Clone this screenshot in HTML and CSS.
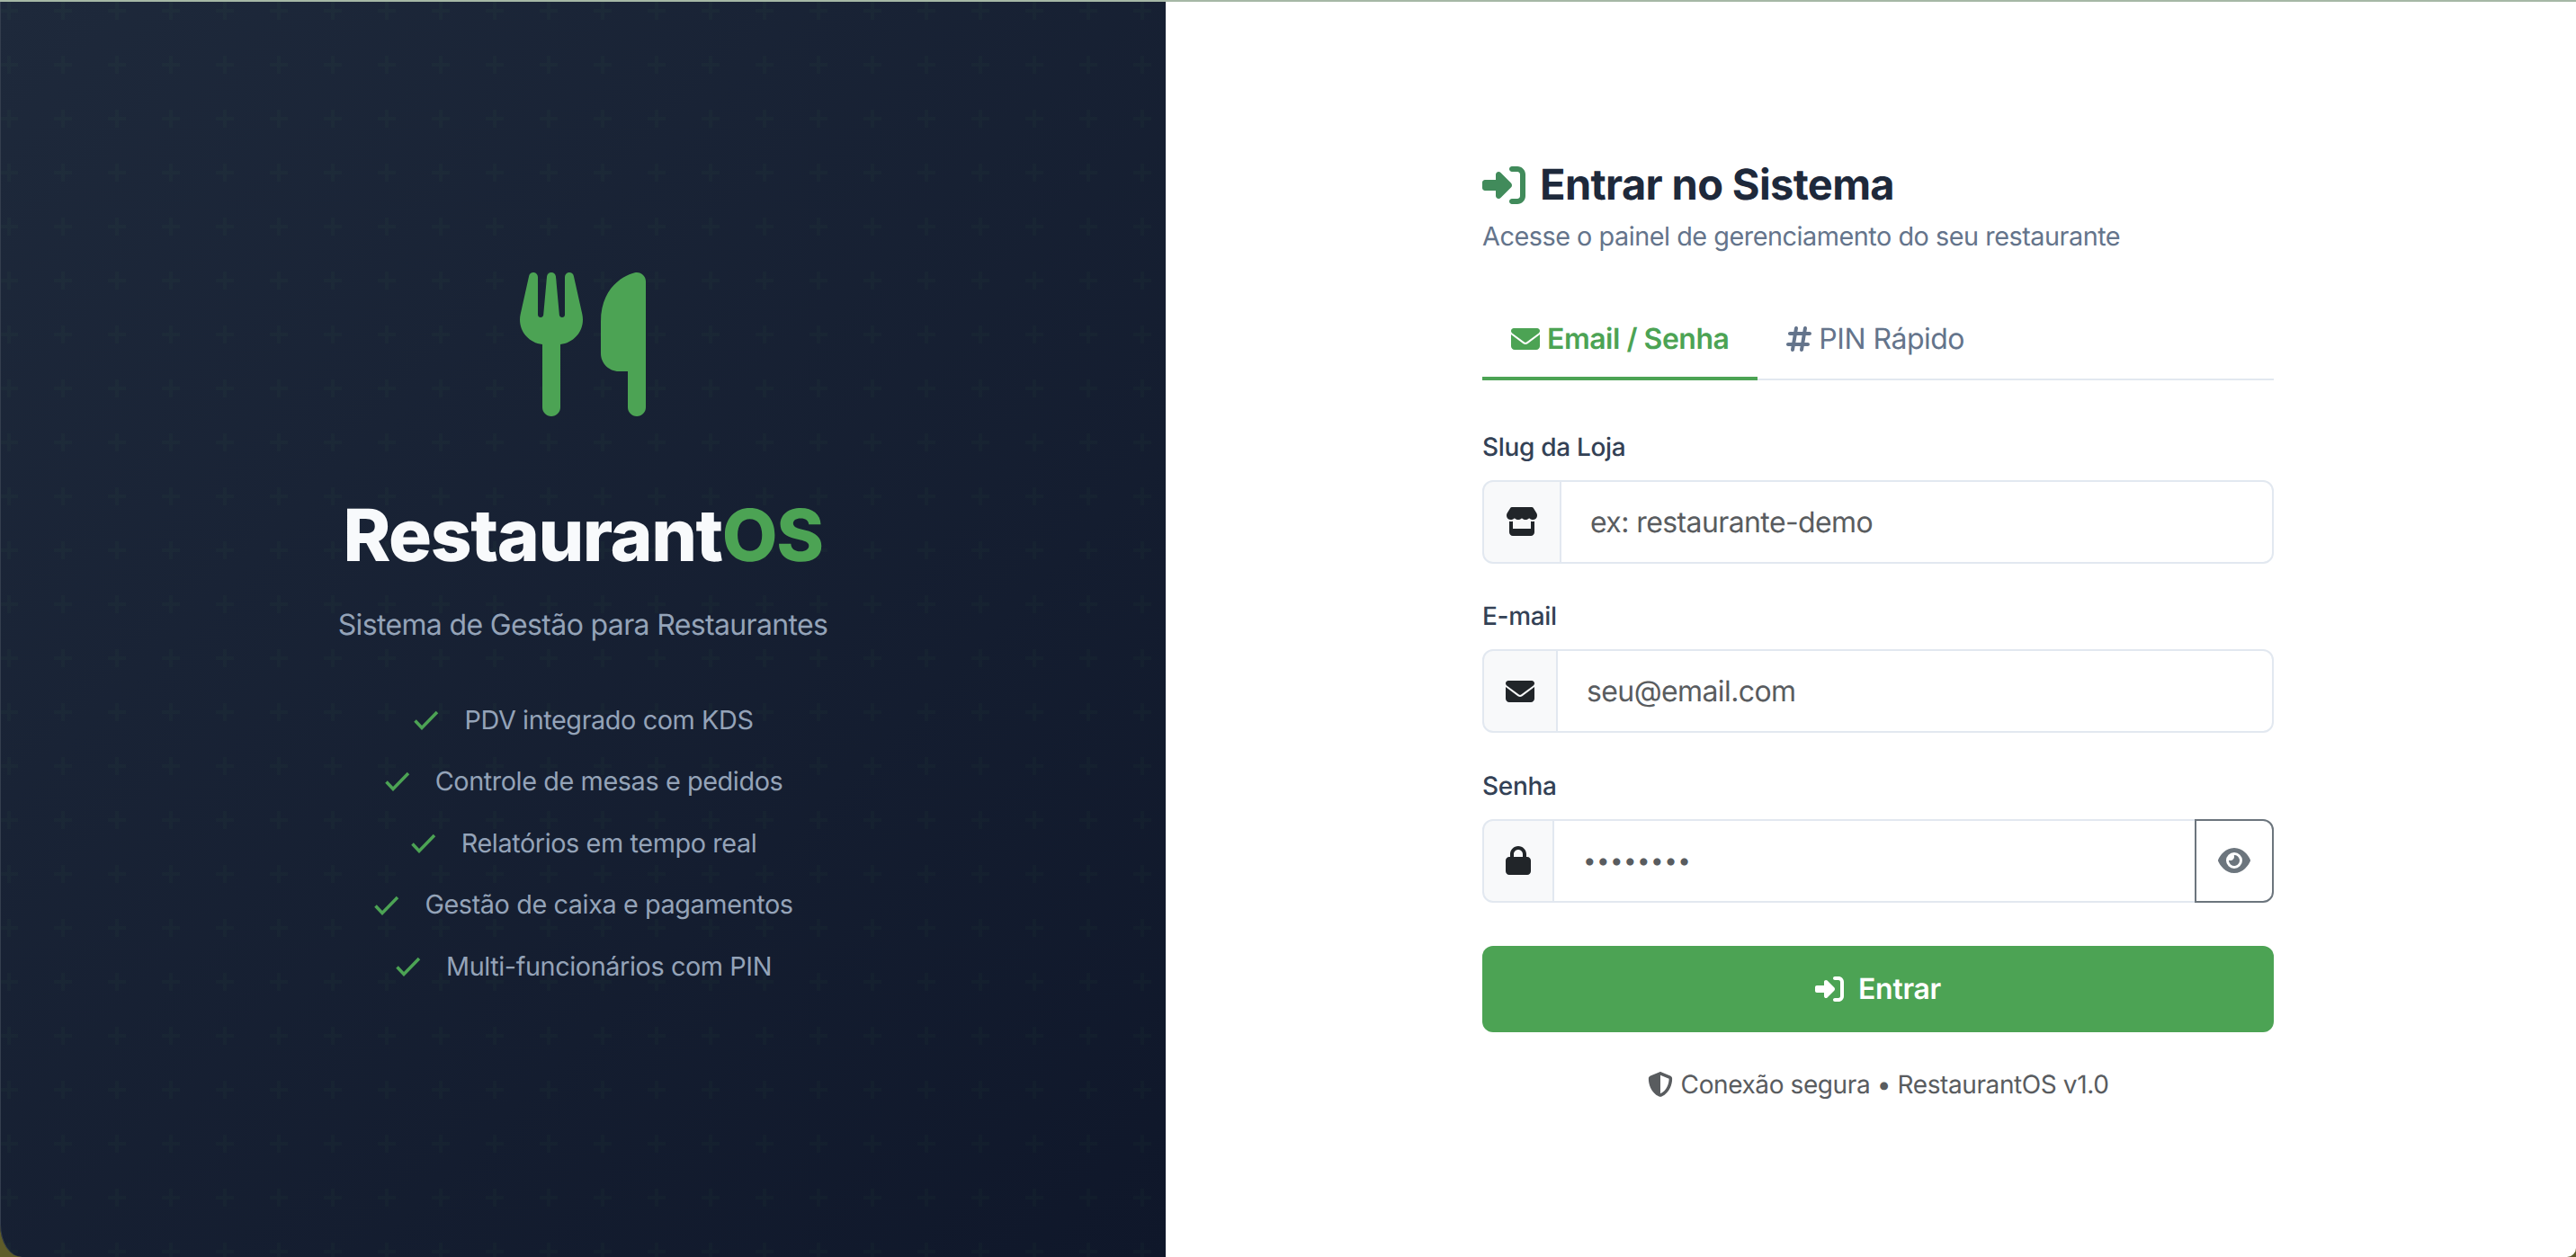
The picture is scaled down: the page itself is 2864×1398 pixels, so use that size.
FILE: index.html
```html
<!DOCTYPE html>
<html lang="pt-BR">
<head>
<meta charset="utf-8">
<title>RestaurantOS</title>
<link rel="stylesheet" href="styles.css">
</head>
<body>
<main class="layout">
  <aside class="brand">
    <svg class="logo" viewBox="0 0 448 512"><path d="M416 0C400 0 288 32 288 176V288c0 35.300 28.700 64 64 64h32V480c0 17.700 14.300 32 32 32s32-14.300 32-32V352 240 32c0-17.700-14.300-32-32-32zM64 16C64 7.800 57.900 1 49.700 .1S34.200 4.600 32.400 12.500L2.100 148.800C.7 155.100 0 161.500 0 167.900c0 45.900 35.100 83.600 80 87.700V480c0 17.700 14.300 32 32 32s32-14.300 32-32V255.600c44.900-4.100 80-41.800 80-87.700c0-6.400-.7-12.800-2.100-19.100L191.600 12.500c-1.800-8-9.300-13.300-17.400-12.400S160 7.800 160 16V150.200c0 5.400-4.400 9.800-9.800 9.800c-5.100 0-9.300-3.900-9.800-9L127.900 14.600C127.200 6.300 120.300 0 112 0s-15.200 6.300-15.900 14.600L83.700 151c-.5 5.100-4.700 9-9.800 9c-5.400 0-9.800-4.400-9.800-9.800V16z"/></svg>
    <h1 class="brand-name">Restaurant<span class="accent">OS</span></h1>
    <p class="brand-tag">Sistema de Gestão para Restaurantes</p>
    <ul class="features">
      <li><svg class="check" viewBox="0 0 28 22"><path d="M1.500 11.500 9 19.500 26 2"/></svg>PDV integrado com KDS</li>
      <li><svg class="check" viewBox="0 0 28 22"><path d="M1.500 11.500 9 19.500 26 2"/></svg>Controle de mesas e pedidos</li>
      <li><svg class="check" viewBox="0 0 28 22"><path d="M1.500 11.500 9 19.500 26 2"/></svg>Relatórios em tempo real</li>
      <li><svg class="check" viewBox="0 0 28 22"><path d="M1.500 11.500 9 19.500 26 2"/></svg>Gestão de caixa e pagamentos</li>
      <li><svg class="check" viewBox="0 0 28 22"><path d="M1.500 11.500 9 19.500 26 2"/></svg>Multi-funcionários com PIN</li>
    </ul>
  </aside>

  <section class="panel">
    <form class="login">
      <h2 class="title">
        <svg class="title-icon" viewBox="0 0 512 512"><path d="M217.900 105.900L340.700 228.700c7.200 7.200 11.300 17.100 11.300 27.300s-4.100 20.100-11.300 27.300L217.900 406.100c-6.400 6.400-15 9.900-24 9.900c-18.700 0-33.900-15.200-33.900-33.900l0-62.100L32 320c-17.700 0-32-14.300-32-32l0-64c0-17.700 14.300-32 32-32l128 0 0-62.100c0-18.700 15.200-33.900 33.900-33.900c9 0 17.600 3.600 24 9.900zM352 416l64 0c17.700 0 32-14.300 32-32l0-256c0-17.700-14.300-32-32-32l-64 0c-17.700 0-32-14.300-32-32s14.300-32 32-32l64 0c53 0 96 43 96 96l0 256c0 53-43 96-96 96l-64 0c-17.700 0-32-14.300-32-32s14.300-32 32-32z"/></svg>
        Entrar no Sistema
      </h2>
      <p class="subtitle">Acesse o painel de gerenciamento do seu restaurante</p>

      <nav class="tabs">
        <a class="tab tab-active">
          <svg class="tab-icon" viewBox="0 0 512 512"><path d="M48 64C21.500 64 0 85.500 0 112c0 15.100 7.100 29.300 19.200 38.400L236.800 313.600c11.400 8.500 27 8.500 38.400 0L492.800 150.400c12.100-9.100 19.200-23.300 19.200-38.400c0-26.500-21.500-48-48-48H48zM0 176V384c0 35.300 28.700 64 64 64H448c35.300 0 64-28.700 64-64V176L294.400 339.200c-22.800 17.100-54 17.100-76.800 0L0 176z"/></svg>
          Email / Senha
        </a>
        <a class="tab">
          <svg class="tab-icon tab-icon-hash" viewBox="0 0 448 512"><path d="M181.300 32.400c17.400 2.900 29.200 19.400 26.300 36.800L197.800 128h95.100l11.500-69.300c2.900-17.400 19.400-29.200 36.800-26.300s29.200 19.400 26.300 36.800L357.800 128H416c17.700 0 32 14.300 32 32s-14.300 32-32 32H347.100L325.800 320H384c17.700 0 32 14.300 32 32s-14.300 32-32 32H315.100l-11.500 69.300c-2.900 17.400-19.400 29.200-36.800 26.300s-29.200-19.400-26.300-36.800l9.800-58.700H155.100l-11.500 69.300c-2.900 17.400-19.400 29.200-36.800 26.300s-29.200-19.400-26.300-36.800L90.200 384H32c-17.700 0-32-14.300-32-32s14.300-32 32-32h68.900l21.300-128H64c-17.700 0-32-14.300-32-32s14.300-32 32-32h68.900l11.500-69.300c2.900-17.400 19.400-29.200 36.800-26.300zM187.100 192L165.800 320h95.100l21.300-128H187.100z"/></svg>
          PIN Rápido
        </a>
      </nav>

      <div class="field field-first">
        <label class="label">Slug da Loja</label>
        <div class="group">
          <span class="addon"><svg class="addon-icon addon-store" viewBox="0 0 576 512"><path d="M547.600 103.800L490.300 13.100C485.200 5 476.100 0 466.400 0H109.600C99.900 0 90.800 5 85.700 13.100L28.300 103.800c-29.600 46.800-3.400 111.900 51.900 119.400c4 .5 8.100 .8 12.100 .8c26.100 0 49.300-11.400 65.200-29c15.900 17.600 39.100 29 65.200 29c26.100 0 49.300-11.400 65.200-29c15.900 17.600 39.100 29 65.200 29c26.200 0 49.300-11.400 65.200-29c16 17.600 39.100 29 65.200 29c4.100 0 8.100-.3 12.100-.8c55.500-7.400 81.800-72.500 52.100-119.400zM499.700 254.900l-.1 0c-5.300 .7-10.700 1.100-16.200 1.100c-12.400 0-24.300-1.900-35.400-5.300V384H128V250.600c-11.200 3.500-23.200 5.400-35.600 5.400c-5.500 0-11-.4-16.300-1.100l-.1 0c-4.100-.6-8.100-1.300-12-2.300V384v64c0 35.300 28.700 64 64 64H448c35.300 0 64-28.700 64-64V384 252.600c-4 1-8 1.800-12.300 2.300z"/></svg></span>
          <input class="control" type="text" placeholder="ex: restaurante-demo">
        </div>
      </div>

      <div class="field">
        <label class="label">E-mail</label>
        <div class="group">
          <span class="addon"><svg class="addon-icon addon-mail" viewBox="0 0 512 512"><path d="M48 64C21.500 64 0 85.500 0 112c0 15.100 7.100 29.300 19.200 38.400L236.800 313.600c11.400 8.500 27 8.500 38.400 0L492.800 150.400c12.100-9.100 19.200-23.300 19.200-38.400c0-26.500-21.500-48-48-48H48zM0 176V384c0 35.300 28.700 64 64 64H448c35.300 0 64-28.700 64-64V176L294.400 339.200c-22.800 17.100-54 17.100-76.800 0L0 176z"/></svg></span>
          <input class="control" type="text" placeholder="seu@email.com">
        </div>
      </div>

      <div class="field">
        <label class="label">Senha</label>
        <div class="group">
          <span class="addon"><svg class="addon-icon addon-lock" viewBox="0 0 448 512"><path d="M144 144v48H304V144c0-44.200-35.800-80-80-80s-80 35.800-80 80zM80 192V144C80 64.500 144.500 0 224 0s144 64.500 144 144v48h16c35.300 0 64 28.700 64 64V448c0 35.300-28.700 64-64 64H64c-35.300 0-64-28.700-64-64V256c0-35.300 28.700-64 64-64H80z"/></svg></span>
          <input class="control control-pass" type="text" placeholder="••••••••">
          <button class="eye" type="button"><svg class="eye-icon" viewBox="0 0 576 512"><path d="M288 32c-80.800 0-145.500 36.800-192.600 80.600C48.600 156 17.300 208 2.500 243.700c-3.300 7.900-3.300 16.700 0 24.600C17.300 304 48.600 356 95.400 399.400C142.500 443.200 207.200 480 288 480s145.500-36.800 192.600-80.600c46.800-43.500 78.100-95.400 93-131.100c3.300-7.900 3.300-16.700 0-24.600c-14.900-35.700-46.200-87.700-93-131.100C433.500 68.800 368.800 32 288 32zM144 256a144 144 0 1 1 288 0 144 144 0 1 1 -288 0zm144-64c0 35.300-28.700 64-64 64c-7.100 0-13.900-1.200-20.300-3.300c-5.500-1.800-11.900 1.600-11.700 7.400c.3 6.900 1.300 13.800 3.200 20.700c13.700 51.200 66.400 81.600 117.600 67.900s81.600-66.400 67.900-117.600c-11.100-41.500-47.800-69.400-88.600-71.100c-5.800-.2-9.200 6.100-7.400 11.700c2.100 6.400 3.300 13.200 3.300 20.300z"/></svg></button>
        </div>
      </div>

      <button class="submit" type="button">
        <svg class="submit-icon" viewBox="0 0 512 512"><path d="M217.900 105.900L340.700 228.700c7.200 7.200 11.300 17.100 11.300 27.300s-4.100 20.100-11.300 27.300L217.900 406.100c-6.400 6.400-15 9.900-24 9.900c-18.700 0-33.900-15.200-33.900-33.900l0-62.100L32 320c-17.700 0-32-14.300-32-32l0-64c0-17.700 14.300-32 32-32l128 0 0-62.100c0-18.700 15.200-33.900 33.900-33.900c9 0 17.600 3.600 24 9.900zM352 416l64 0c17.700 0 32-14.300 32-32l0-256c0-17.700-14.300-32-32-32l-64 0c-17.700 0-32-14.300-32-32s14.300-32 32-32l64 0c53 0 96 43 96 96l0 256c0 53-43 96-96 96l-64 0c-17.700 0-32-14.300-32-32s14.300-32 32-32z"/></svg>
        Entrar
      </button>

      <p class="foot">
        <svg class="foot-icon" viewBox="0 0 512 512"><path d="M256 0c4.600 0 9.200 1 13.400 2.900L457.700 82.800c22 9.300 38.400 31 38.300 57.200c-.5 99.200-41.300 280.700-213.600 363.200c-16.700 8-36.100 8-52.800 0C57.300 420.700 16.500 239.200 16 140c-.1-26.200 16.300-47.900 38.300-57.200L242.700 2.900C246.800 1 251.400 0 256 0zm0 66.800V444.800C394 378 431.100 230.100 432 141.400L256 66.800l0 0z"/></svg>
        Conexão segura • RestaurantOS v1.0
      </p>
    </form>
  </section>
</main>
</body>
</html>
```
FILE: styles.css
```css
* { box-sizing: border-box; }

html, body { height: 100%; }

body {
  margin: 0;
  background: #5f5c2a;
  font-family: "Inter", "Noto Sans", sans-serif;
  text-rendering: geometricPrecision;
  letter-spacing: -0.02em;
  color: #212529;
  overflow: hidden;
}

.layout {
  display: flex;
  height: 1398px;
  border-top: 2px solid #a6b8a6;
}

.brand {
  width: 1296px;
  flex: none;
  display: flex;
  flex-direction: column;
  align-items: center;
  justify-content: center;
  box-shadow: inset 1px 0 0 #343e4e;
  border-bottom-left-radius: 24px 36px;
  background-color: #172033;
  background-image:
    url("data:image/svg+xml,%3Csvg xmlns='http://www.w3.org/2000/svg' width='60' height='60'%3E%3Cpath fill='%234caf50' fill-opacity='.035' d='M8 0h4v8h8v4h-8v8H8v-8H0V8h8z'/%3E%3C/svg%3E"),
    linear-gradient(135deg, #1e293b 0%, #0f172a 100%);
  background-repeat: repeat, no-repeat;
}

.logo {
  display: block;
  width: 140px;
  height: 160px;
  fill: #4ca354;
}

.brand-name {
  margin: 85px 0 0;
  font-size: 80px;
  line-height: 96px;
  font-weight: 800;
  letter-spacing: -1.4px;
  color: #f8fafc;
}

.accent { color: #4ca354; }

.brand-tag {
  margin: 25px 0 0;
  font-size: 32px;
  line-height: 52px;
  letter-spacing: -0.64px;
  color: #94a3b8;
}

.features {
  list-style: none;
  margin: 58px 0 0;
  padding: 0 0 0 2px;
  display: flex;
  flex-direction: column;
  gap: 24px;
}

.features li {
  display: flex;
  align-items: center;
  justify-content: center;
  gap: 28px;
  font-size: 28.8px;
  line-height: 44.6px;
  letter-spacing: -0.4px;
  color: #94a3b8;
}

.check {
  width: 28px;
  height: 22px;
  fill: none;
  stroke: #4ca354;
  stroke-width: 3.5;
  flex: none;
}

.panel {
  flex: 1;
  display: flex;
  align-items: center;
  justify-content: center;
  padding: 4px 0 0 16px;
  border-bottom-right-radius: 10px;
  background: #fff;
}

.login { width: 880px; }

.title {
  display: flex;
  align-items: center;
  gap: 16px;
  margin: 0;
  font-size: 47px;
  line-height: 56px;
  font-weight: 700;
  letter-spacing: -0.65px;
  color: #1e293b;
}

.title-icon {
  width: 48px;
  height: 48px;
  fill: #418b5b;
  flex: none;
}

.subtitle {
  margin: 6px 0 0;
  font-size: 28.8px;
  line-height: 45px;
  letter-spacing: -0.47px;
  color: #64748b;
}

.tabs {
  display: flex;
  margin-top: 44px;
  border-bottom: 2px solid #e2e8f0;
}

.tab {
  display: flex;
  align-items: center;
  gap: 8px;
  margin-bottom: -2px;
  padding: 24px 32px 18px;
  font-size: 32px;
  line-height: 48px;
  font-weight: 400;
  letter-spacing: -0.5px;
  color: #64748b;
  border-bottom: 4px solid transparent;
}

.tab-active {
  font-weight: 600;
  color: #4ca354;
  border-bottom-color: #4ca354;
}

.tab-icon {
  width: 32px;
  height: 32px;
  fill: currentColor;
  flex: none;
}

.tab-icon-hash { width: 28px; }

.field { margin-top: 37.5px; }

.field-first { margin-top: 53px; }

.label {
  display: block;
  margin-bottom: 16px;
  font-size: 28px;
  line-height: 42px;
  font-weight: 500;
  color: #334155;
}

.group {
  display: flex;
  height: 93px;
}

.addon {
  display: flex;
  align-items: center;
  flex: none;
  padding: 0 24px;
  background: #f8f9fa;
  border: 2px solid #e2e8f0;
  border-radius: 12px 0 0 12px;
}

.addon-icon {
  display: block;
  height: 32px;
  fill: #212529;
}

.addon-store { width: 36px; }
.addon-mail { width: 32px; }
.addon-lock { width: 28px; }

.control {
  flex: 1;
  min-width: 0;
  margin-left: -2px;
  padding: 0 32px;
  font: inherit;
  font-size: 32px;
  text-rendering: geometricPrecision;
  letter-spacing: -0.6px;
  color: #212529;
  background: #fff;
  border: 2px solid #e2e8f0;
  border-radius: 0 12px 12px 0;
  outline: none;
}

.control::placeholder { color: #595c5f; opacity: 1; }

.control-pass {
  border-radius: 0;
  font-size: 26px;
  letter-spacing: 0.4px;
}

.eye {
  flex: none;
  width: 88px;
  display: flex;
  align-items: center;
  justify-content: center;
  margin-left: -2px;
  padding: 0;
  background: #fff;
  border: 2px solid #6c757d;
  border-radius: 0 12px 12px 0;
}

.eye-icon {
  width: 36px;
  height: 32px;
  fill: #6c757d;
}

.submit {
  display: flex;
  align-items: center;
  justify-content: center;
  gap: 16px;
  width: 100%;
  height: 96px;
  margin-top: 48px;
  font: inherit;
  font-size: 32px;
  font-weight: 600;
  text-rendering: geometricPrecision;
  letter-spacing: -0.3px;
  color: #fff;
  background: #4ca354;
  border: 0;
  border-radius: 12px;
}

.submit-icon {
  width: 32px;
  height: 32px;
  fill: #fff;
}

.foot {
  display: flex;
  align-items: center;
  justify-content: center;
  gap: 9px;
  margin: 37px 0 0;
  font-size: 28px;
  line-height: 42px;
  letter-spacing: -0.4px;
  color: #595c5f;
}

.foot-icon {
  width: 28px;
  height: 28px;
  fill: #595c5f;
}
```
